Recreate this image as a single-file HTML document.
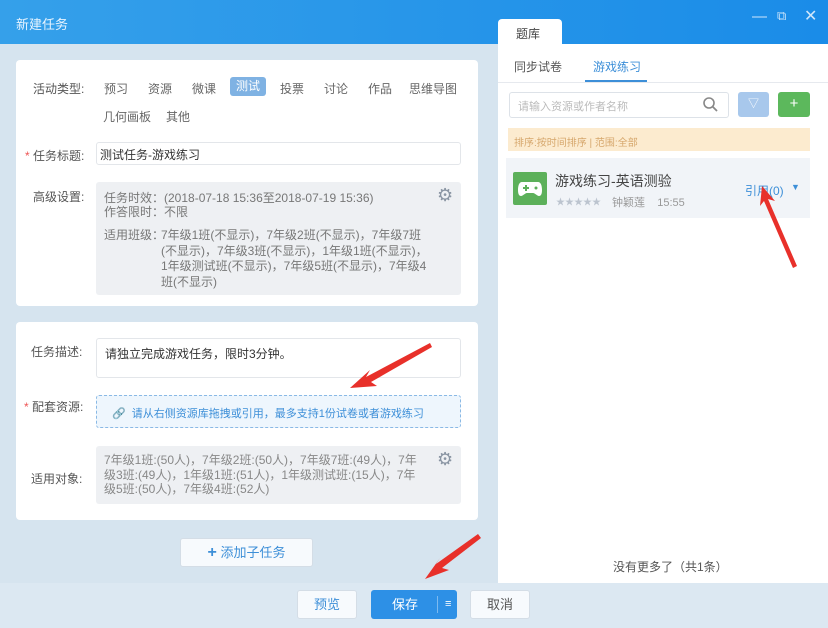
<!DOCTYPE html>
<html><head><meta charset="utf-8"><style>
*{margin:0;padding:0;box-sizing:border-box}
body{width:828px;height:628px;overflow:hidden;position:relative;font-family:"Liberation Sans","Noto Sans CJK SC",sans-serif;font-size:12px;color:#555;background:#d6e4ef}
.abs{position:absolute}
.hdr{left:0;top:0;width:828px;height:44px;background:linear-gradient(90deg,#35a0ea,#1a8ce8)}
.card{background:#fff;border-radius:4px}
.lbl{font-size:12px;color:#555}
.gray{background:#eef0f3;border-radius:3px}
.btn{background:#f7fafd;border:1px solid #d4dde6;border-radius:3px;text-align:center}
</style></head><body>
<div class="abs hdr"></div>
<div class="abs" style="left:16px;top:14px;color:#e8f4ff;font-size:13px">新建任务</div>
<div class="abs" style="left:498px;top:19px;width:64px;height:26px;background:#fff;border-radius:4px 4px 0 0"></div>
<div class="abs" style="left:516px;top:25px;font-size:12px;color:#444">题库</div>
<div class="abs" style="left:752px;top:8px;color:#cfe6fb;font-size:15px">—</div>
<div class="abs" style="left:777px;top:8px;color:#cfe6fb;font-size:13px">⧉</div>
<div class="abs" style="left:804px;top:6px;color:#cfe6fb;font-size:16px">✕</div>

<!-- right panel -->
<div class="abs" style="left:498px;top:44px;width:330px;height:540px;background:#fff"></div>
<div class="abs" style="left:498px;top:82px;width:330px;height:1px;background:#e6e9ee"></div>
<div class="abs" style="left:514px;top:58px;color:#555">同步试卷</div>
<div class="abs" style="left:593px;top:58px;color:#3d8fd8">游戏练习</div>
<div class="abs" style="left:585px;top:80px;width:62px;height:2px;background:#3d8fd8"></div>
<div class="abs" style="left:509px;top:92px;width:220px;height:26px;border:1px solid #dde2e8;border-radius:3px"></div>
<div class="abs" style="left:518px;top:98px;color:#bbb;font-size:11px">请输入资源或作者名称</div>
<svg class="abs" style="left:702px;top:96px" width="16" height="16"><circle cx="7" cy="7" r="5" stroke="#888" stroke-width="1.6" fill="none"/><line x1="11" y1="11" x2="15" y2="15" stroke="#888" stroke-width="1.8"/></svg>
<div class="abs" style="left:738px;top:92px;width:31px;height:25px;background:#a8c8ec;border-radius:3px;color:#fff;text-align:center;line-height:25px;font-size:11px">▽</div>
<div class="abs" style="left:778px;top:92px;width:32px;height:25px;background:#5cb85c;border-radius:3px;color:#fff;text-align:center;line-height:24px;font-size:15px">+</div>
<div class="abs" style="left:508px;top:128px;width:302px;height:23px;background:#fcebcf"></div>
<div class="abs" style="left:514px;top:134px;color:#d6a76c;font-size:10px">排序:按时间排序 | 范围:全部</div>
<div class="abs" style="left:506px;top:158px;width:304px;height:60px;background:#f1f4f8"></div>
<div class="abs" style="left:513px;top:172px;width:34px;height:33px;background:#5cb05a;border-radius:2px"></div>
<svg class="abs" style="left:517px;top:178px" width="26" height="20"><path d="M5 4h16c3 0 4 4 4 8s-1 6-3 6-4-3-6-3h-6c-2 0-4 3-6 3S1 16 1 12s1-8 4-8z" fill="#fff"/><rect x="6" y="9" width="6" height="2" fill="#5cb05a"/><rect x="8" y="7" width="2" height="6" fill="#5cb05a"/><circle cx="19" cy="10" r="1.5" fill="#5cb05a"/></svg>
<div class="abs" style="left:555px;top:171px;font-size:14px;color:#444">游戏练习-英语测验</div>
<div class="abs" style="left:556px;top:195px;font-size:9px;color:#bcc4cf">★★★★★</div>
<div class="abs" style="left:612px;top:194px;font-size:11px;color:#999">钟颖莲&nbsp;&nbsp;&nbsp;&nbsp;15:55</div>
<div class="abs" style="left:745px;top:182px;color:#3d8fd8;font-size:12px">引用(0)</div>
<div class="abs" style="left:791px;top:182px;color:#3d8fd8;font-size:9px">▼</div>
<div class="abs" style="left:613px;top:558px;color:#555;font-size:12px">没有更多了（共1条）</div>

<!-- card 1 -->
<div class="abs card" style="left:16px;top:60px;width:462px;height:246px"></div>
<div class="abs lbl" style="left:33px;top:80px">活动类型:</div>
<div class="abs" style="left:104px;top:80px;color:#666">预习</div>
<div class="abs" style="left:148px;top:80px;color:#666">资源</div>
<div class="abs" style="left:192px;top:80px;color:#666">微课</div>
<div class="abs" style="left:230px;top:77px;width:36px;height:19px;background:#7fb2e3;border-radius:3px;color:#fff;text-align:center;line-height:19px">测试</div>
<div class="abs" style="left:280px;top:80px;color:#666">投票</div>
<div class="abs" style="left:324px;top:80px;color:#666">讨论</div>
<div class="abs" style="left:368px;top:80px;color:#666">作品</div>
<div class="abs" style="left:409px;top:80px;color:#666">思维导图</div>
<div class="abs" style="left:103px;top:108px;color:#666">几何画板</div>
<div class="abs" style="left:166px;top:108px;color:#666">其他</div>
<div class="abs lbl" style="left:25px;top:147px"><span style="color:#e55">*</span> 任务标题:</div>
<div class="abs" style="left:96px;top:142px;width:365px;height:23px;border:1px solid #e3e6ea;border-radius:3px"></div>
<div class="abs" style="left:100px;top:146px;color:#333">测试任务-游戏练习</div>
<div class="abs lbl" style="left:33px;top:188px">高级设置:</div>
<div class="abs gray" style="left:96px;top:182px;width:365px;height:113px"></div>
<div class="abs" style="left:104px;top:191px;color:#777;line-height:14px">任务时效：(2018-07-18 15:36至2018-07-19 15:36)<br>作答限时：不限</div>
<div class="abs" style="left:104px;top:228px;color:#777;line-height:15px">适用班级：</div>
<div class="abs" style="left:161px;top:228px;color:#777;line-height:15.5px;width:270px;word-break:break-all">7年级1班(不显示)，7年级2班(不显示)，7年级7班(不显示)，7年级3班(不显示)，1年级1班(不显示)，1年级测试班(不显示)，7年级5班(不显示)，7年级4班(不显示)</div>
<div class="abs" style="left:437px;top:185px;color:#8a95a3;font-size:18px">⚙</div>

<!-- card 2 -->
<div class="abs card" style="left:16px;top:322px;width:462px;height:198px"></div>
<div class="abs lbl" style="left:31px;top:343px">任务描述:</div>
<div class="abs" style="left:96px;top:338px;width:365px;height:40px;border:1px solid #e3e6ea;border-radius:3px"></div>
<div class="abs" style="left:105px;top:345px;color:#333">请独立完成游戏任务，限时3分钟。</div>
<div class="abs lbl" style="left:24px;top:398px"><span style="color:#e55">*</span> 配套资源:</div>
<div class="abs" style="left:96px;top:395px;width:365px;height:33px;border:1px dashed #8ab9e5;border-radius:3px;background:#eef6fd"></div>
<div class="abs" style="left:112px;top:405px;color:#3d8fd8;font-size:11px">🔗&nbsp; 请从右侧资源库拖拽或引用，最多支持1份试卷或者游戏练习</div>
<div class="abs lbl" style="left:31px;top:470px">适用对象:</div>
<div class="abs gray" style="left:96px;top:446px;width:365px;height:58px"></div>
<div class="abs" style="left:104px;top:453px;width:320px;color:#888;line-height:14.5px">7年级1班:(50人)，7年级2班:(50人)，7年级7班:(49人)，7年级3班:(49人)，1年级1班:(51人)，1年级测试班:(15人)，7年级5班:(50人)，7年级4班:(52人)</div>
<div class="abs" style="left:437px;top:449px;color:#8a95a3;font-size:18px">⚙</div>

<div class="abs btn" style="left:180px;top:538px;width:133px;height:29px;line-height:27px;color:#3d8fd8;font-size:13px"><b style="font-size:16px">+</b> 添加子任务</div>

<!-- footer -->
<div class="abs" style="left:0;top:583px;width:828px;height:45px;background:#dce8f2"></div>
<div class="abs btn" style="left:297px;top:590px;width:60px;height:29px;line-height:27px;color:#3d8fd8;font-size:13px">预览</div>
<div class="abs" style="left:371px;top:590px;width:86px;height:29px;background:#2d90e6;border-radius:3px;color:#fff;font-size:13px;line-height:29px;padding-left:21px">保存<span style="position:absolute;left:66px;top:6px;height:17px;border-left:1px solid #7dbaf0"></span><span style="position:absolute;left:74px;top:0;font-size:11px">≡</span></div>
<div class="abs btn" style="left:470px;top:590px;width:60px;height:29px;line-height:27px;color:#555;font-size:13px">取消</div>

<!-- arrows -->
<svg class="abs" style="left:0;top:0" width="828" height="628">
<g fill="#e8302a">
<path d="M430 343 L366 377 L370 370 L350 388 L377 386 L371 382 L432 347Z"/>
<path d="M797 266 L768 199 L775 201 L762 186 L760 206 L764 201 L793 268Z"/>
<path d="M478 534 L436 564 L440 558 L425 579 L449 570 L442 568 L481 538Z"/>
</g></svg>
</body></html>
